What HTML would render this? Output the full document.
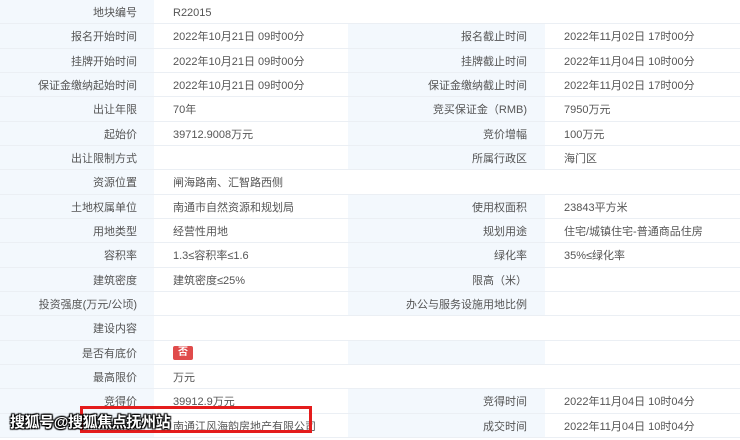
<!DOCTYPE html>
<html><head><meta charset="utf-8"><style>
*{margin:0;padding:0;box-sizing:border-box}
body{width:740px;height:438px;overflow:hidden;background:#fff;font-family:"Liberation Sans","Noto Sans CJK SC",sans-serif;font-size:11px;color:#555;position:relative}
.r{position:absolute;left:0;width:740px;height:24.33px;border-bottom:1px solid #ebeff4}
.c{position:absolute;top:0;height:100%;line-height:26px;white-space:nowrap}
.l1{left:0;width:154px;background:#f3f8fd;text-align:right;padding-right:17px}
.v1{left:154px;width:194px;padding-left:19px}
.l2{left:348px;width:197px;background:#f3f8fd;text-align:right;padding-right:18px}
.v2{left:545px;width:195px;padding-left:19px}
.tag{display:inline-block;background:#e04b4b;color:#fff;font-size:10px;line-height:14px;padding:0 5px;border-radius:2px;vertical-align:middle;font-weight:bold;margin-top:-2px}
.wm{position:absolute;left:10px;top:411px;font-size:15px;font-weight:bold;color:#fff;text-shadow:0 0 2px #000,1px 1px 1px #000,-1px -1px 1px #000,1px -1px 1px #000,-1px 1px 1px #000;letter-spacing:-0.4px}
.box{position:absolute;left:80px;top:406px;width:232px;height:27px;border:3px solid #e41c1c}
</style></head><body>
<div class="r" style="top:0"><div class="c l1">地块编号</div><div class="c v1">R22015</div></div>
<div class="r" style="top:24.33px"><div class="c l1">报名开始时间</div><div class="c v1">2022年10月21日 09时00分</div><div class="c l2">报名截止时间</div><div class="c v2">2022年11月02日 17时00分</div></div>
<div class="r" style="top:48.67px"><div class="c l1">挂牌开始时间</div><div class="c v1">2022年10月21日 09时00分</div><div class="c l2">挂牌截止时间</div><div class="c v2">2022年11月04日 10时00分</div></div>
<div class="r" style="top:73px"><div class="c l1">保证金缴纳起始时间</div><div class="c v1">2022年10月21日 09时00分</div><div class="c l2">保证金缴纳截止时间</div><div class="c v2">2022年11月02日 17时00分</div></div>
<div class="r" style="top:97.33px"><div class="c l1">出让年限</div><div class="c v1">70年</div><div class="c l2">竞买保证金（RMB)</div><div class="c v2">7950万元</div></div>
<div class="r" style="top:121.67px"><div class="c l1">起始价</div><div class="c v1">39712.9008万元</div><div class="c l2">竞价增幅</div><div class="c v2">100万元</div></div>
<div class="r" style="top:146px"><div class="c l1">出让限制方式</div><div class="c v1"></div><div class="c l2">所属行政区</div><div class="c v2">海门区</div></div>
<div class="r" style="top:170.33px"><div class="c l1">资源位置</div><div class="c v1">闸海路南、汇智路西侧</div></div>
<div class="r" style="top:194.67px"><div class="c l1">土地权属单位</div><div class="c v1">南通市自然资源和规划局</div><div class="c l2">使用权面积</div><div class="c v2">23843平方米</div></div>
<div class="r" style="top:219px"><div class="c l1">用地类型</div><div class="c v1">经营性用地</div><div class="c l2">规划用途</div><div class="c v2">住宅/城镇住宅-普通商品住房</div></div>
<div class="r" style="top:243.33px"><div class="c l1">容积率</div><div class="c v1">1.3≤容积率≤1.6</div><div class="c l2">绿化率</div><div class="c v2">35%≤绿化率</div></div>
<div class="r" style="top:267.67px"><div class="c l1">建筑密度</div><div class="c v1">建筑密度≤25%</div><div class="c l2">限高（米）</div><div class="c v2"></div></div>
<div class="r" style="top:292px"><div class="c l1">投资强度(万元/公顷)</div><div class="c v1"></div><div class="c l2">办公与服务设施用地比例</div><div class="c v2"></div></div>
<div class="r" style="top:316.33px"><div class="c l1">建设内容</div></div>
<div class="r" style="top:340.67px"><div class="c l1">是否有底价</div><div class="c v1"><span class="tag">否</span></div><div class="c l2"></div></div>
<div class="r" style="top:365px"><div class="c l1">最高限价</div><div class="c v1">万元</div></div>
<div class="r" style="top:389.33px"><div class="c l1">竞得价</div><div class="c v1">39912.9万元</div><div class="c l2">竞得时间</div><div class="c v2">2022年11月04日 10时04分</div></div>
<div class="r" style="top:413.67px"><div class="c l1">竞得人</div><div class="c v1">南通江风海韵房地产有限公司</div><div class="c l2">成交时间</div><div class="c v2">2022年11月04日 10时04分</div></div>
<div class="box"></div>
<div class="wm">搜狐号@搜狐焦点抚州站</div>
</body></html>
